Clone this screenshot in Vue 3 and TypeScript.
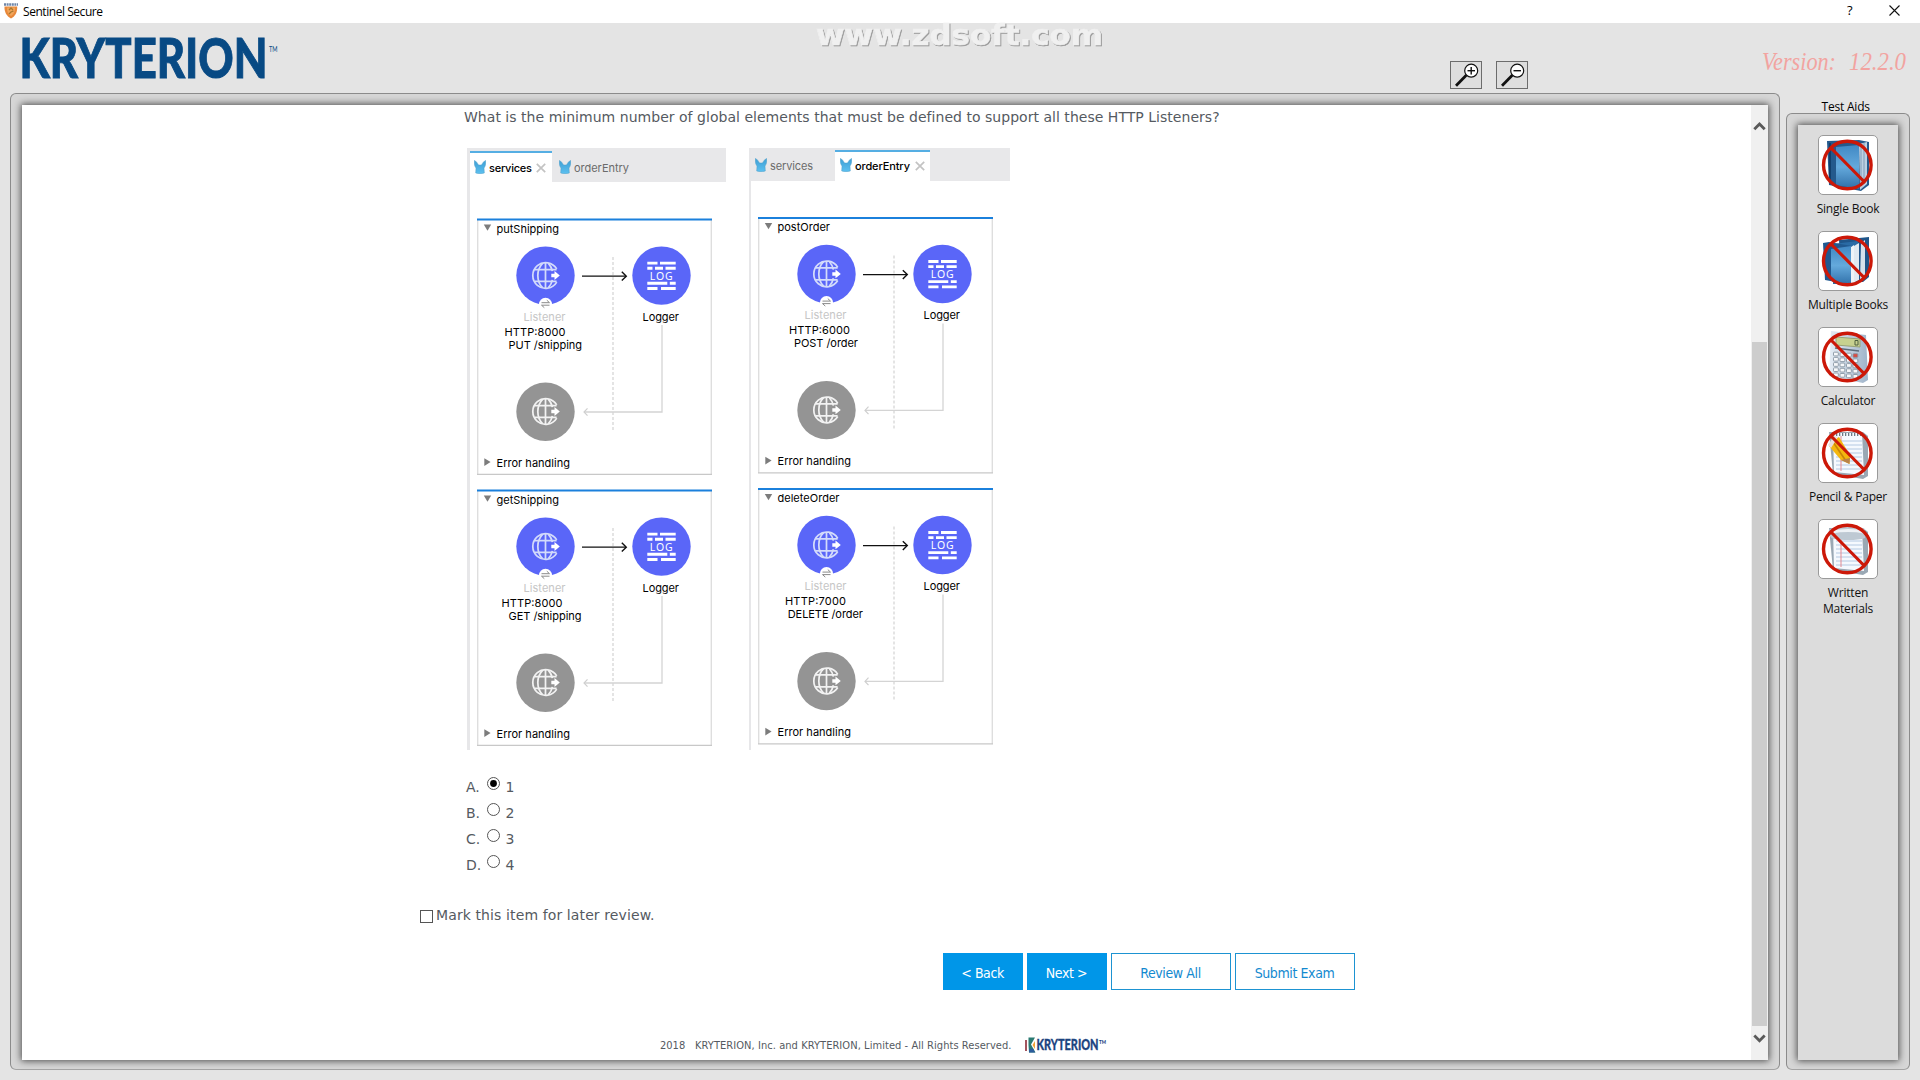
<script setup lang="ts">
interface Flow {
  title: string
  titleWidth: number
  http: string
  httpX: number
  route: string
  routeX: number
  routeWidth: number
}
interface Tab {
  label: string
  active: boolean
  width: number
}
interface Editor {
  id: string
  viewBox: string
  tabs: Tab[]
  flows: Flow[]
}

const editors: Editor[] = [
  {
    id: 'left',
    viewBox: '0 0 236 258',
    tabs: [
      { label: 'services', active: true, width: 43 },
      { label: 'orderEntry', active: false, width: 55 },
    ],
    flows: [
      { title: 'putShipping', titleWidth: 62.5, http: 'HTTP:8000', httpX: 27.5, route: 'PUT /shipping', routeX: 31.5, routeWidth: 73.5 },
      { title: 'getShipping', titleWidth: 62.5, http: 'HTTP:8000', httpX: 24.5, route: 'GET /shipping', routeX: 31.5, routeWidth: 73 },
    ],
  },
  {
    id: 'right',
    viewBox: '0 0.6 236 258',
    tabs: [
      { label: 'services', active: false, width: 43 },
      { label: 'orderEntry', active: true, width: 55 },
    ],
    flows: [
      { title: 'postOrder', titleWidth: 52.5, http: 'HTTP:6000', httpX: 31, route: 'POST /order', routeX: 36, routeWidth: 64 },
      { title: 'deleteOrder', titleWidth: 62, http: 'HTTP:7000', httpX: 27, route: 'DELETE /order', routeX: 29.7, routeWidth: 75.3 },
    ],
  },
]

const options = [
  { letter: 'A.', value: '1' },
  { letter: 'B.', value: '2' },
  { letter: 'C.', value: '3' },
  { letter: 'D.', value: '4' },
]
const selected = '1'

const aids = [
  { kind: 'book', label: 'Single Book' },
  { kind: 'books', label: 'Multiple Books' },
  { kind: 'calc', label: 'Calculator' },
  { kind: 'pencil', label: 'Pencil & Paper' },
  { kind: 'written', label: 'Written Materials' },
]
</script>

<template>
  <div class="window">
    <svg width="0" height="0" class="defs">
      <defs>
        <linearGradient id="cover" x1="0" y1="0" x2="0" y2="1">
          <stop offset="0" stop-color="#4088c4" />
          <stop offset="0.5" stop-color="#64a9dc" />
          <stop offset="1" stop-color="#2f6fa8" />
        </linearGradient>
        <linearGradient id="steel" x1="0" y1="0" x2="1" y2="0">
          <stop offset="0" stop-color="#e6edf5" />
          <stop offset="1" stop-color="#9fb4ca" />
        </linearGradient>
        <linearGradient id="horn" x1="0" y1="0" x2="0" y2="1">
          <stop offset="0" stop-color="#3e9fd4" />
          <stop offset="1" stop-color="#5cc0f0" />
        </linearGradient>
        <symbol id="globe" viewBox="-15 -15 30 30">
          <g fill="none" stroke="currentColor" stroke-width="1.8">
            <path d="M11.600 -6.800A13.300 13.300 0 1 0 11.600 6.800" />
            <path d="M0 -13V13M-3 -12.600C-9.600 -6 -9.600 6 -3 12.600M3 -12.600C5.400 -10 6.600 -7 7.100 -4.500M3 12.600C5.400 10 6.600 7 7.100 4.500" />
            <path d="M-11.500 -6.200H11.500M-11.500 6.200H11.500" />
          </g>
          <path d="M6 -1.800H9.300V-4.600L14.800 0L9.300 4.600V1.800H6Z" fill="#fff" />
        </symbol>
      </defs>
    </svg>

    <header class="titlebar">
      <svg class="shield" width="16" height="16" viewBox="0 0 16 16">
        <path d="M1 1.500H15" stroke="#6f86a8" stroke-width="2.400" stroke-dasharray="2 .6" />
        <path d="M1.500 3.500H14.200C14.500 9 12.500 13 8 15.600C3.500 13 1.200 9 1.500 3.500Z" fill="#e8883a" />
        <path d="M4 4.500H12C12.200 8.500 11 11 8 13C5 11 3.800 8.500 4 4.500Z" fill="#f2a55a" />
        <path d="M6 7L8 5L10 7M6 11L8 9L10.500 8" stroke="#a8772e" stroke-width="1.300" fill="none" />
      </svg>
      <span class="wintitle">Sentinel Secure</span>
      <span class="help">?</span>
      <svg class="close" width="11" height="11" viewBox="0 0 11 11"><path d="M.5 .5L10.500 10.500M10.500 .5L.5 10.500" stroke="#111" stroke-width="1.100" /></svg>
    </header>

    <section class="banner">
      <svg class="logo" width="262" height="60" viewBox="0 0 262 60">
        <text x="-.5" y="46.300" textLength="248" lengthAdjust="spacingAndGlyphs" font-size="55" font-weight="900" class="lato" fill="#084a84" stroke="#084a84" stroke-width=".9">KRYTERION</text>
        <text x="249" y="19.500" textLength="8.500" lengthAdjust="spacingAndGlyphs" font-size="7" class="lato" fill="#084a84">TM</text>
      </svg>
      <div class="zooms">
        <button v-for="sign in ['plus', 'minus']" :key="sign" class="zoom">
          <svg width="30" height="26" viewBox="0 0 30 26">
            <path d="M5 23.800L15.500 13" stroke="#111" stroke-width="2.800" />
            <circle cx="20.200" cy="8.700" r="6.500" fill="#fff" stroke="#111" stroke-width="1.200" />
            <path d="M16.500 8.700H24" stroke="#111" stroke-width="1.400" />
            <path v-if="sign === 'plus'" d="M20.200 5V12.500" stroke="#111" stroke-width="1.400" />
          </svg>
        </button>
      </div>
      <svg class="version" width="150" height="32" viewBox="0 0 150 32">
        <text x="2" y="23" textLength="74" lengthAdjust="spacingAndGlyphs">Version:</text>
        <text x="89" y="23" textLength="57" lengthAdjust="spacingAndGlyphs">12.2.0</text>
      </svg>
    </section>
    <svg class="watermark" width="300" height="40" viewBox="0 0 300 40">
      <g class="stamp">
        <text x="6" y="26.500" textLength="287" lengthAdjust="spacingAndGlyphs">www.zdsoft.com</text>
      </g>
    </svg>

    <div class="columns">
      <main class="frame main">
        <div class="page">
          <div class="content">
            <p class="question">What is the minimum number of global elements that must be defined to support all these HTTP Listeners?</p>
            <div class="editors">
              <div v-for="ed in editors" :key="ed.id" class="editor" :class="ed.id">
                <div class="tabs">
                  <div v-for="tab in ed.tabs" :key="tab.label" class="tab" :class="{ active: tab.active }">
                    <svg width="12" height="14" viewBox="0 0 12 14">
                      <path d="M.4 .4C1.900 .9 3.600 3.200 4.500 5H7.500C8.400 3.200 10.100 .9 11.600 .4C12 3.800 11.500 6 10 8L10.300 13C7.500 13.900 4.500 13.900 1.700 13L2 8C.5 6 0 3.800 .4 .4Z" fill="url(#horn)" stroke="#4f9fc9" stroke-width=".5" />
                    </svg>
                    <svg :width="tab.width" height="16" class="tabtext"><text x="0" y="12" :textLength="tab.width">{{ tab.label }}</text></svg>
                    <svg v-if="tab.active" class="x" width="10" height="10" viewBox="0 0 10 10"><path d="M.8 .8L9.200 9.200M9.200 .8L.8 9.200" stroke="#c3c3c3" stroke-width="1.700" /></svg>
                  </div>
                </div>
                <div class="flows">
                  <svg v-for="flow in ed.flows" :key="flow.title" class="flow" width="236" height="258" :viewBox="ed.viewBox">
                    <path d="M.7 2V256.500M234.300 2V256.500" stroke="#dedede" stroke-width="1.400" />
                    <path d="M0 256.400H235" stroke="#c8c8c8" stroke-width="1.200" />
                    <path d="M0 1.500H235" stroke="#1b80dc" stroke-width="2" />
                    <path d="M6.800 6.500H14.200L10.500 12.800Z" fill="#7c7c7c" />
                    <text x="19.500" y="14.500" :textLength="flow.titleWidth">{{ flow.title }}</text>
                    <path d="M136 39V212" stroke="#dcdcdc" stroke-width="1.500" stroke-dasharray="3 2" />
                    <path d="M185 107V194H107" fill="none" stroke="#d4d4d4" stroke-width="1.300" />
                    <path d="M110.500 190.300L107 194L110.500 197.700" fill="none" stroke="#cfcfcf" stroke-width="1.200" />
                    <circle cx="68.500" cy="57.600" r="29.200" fill="#5a66f8" />
                    <use href="#globe" x="54" y="43" width="29" height="29" class="pale" />
                    <circle cx="68.500" cy="86.300" r="6.600" fill="#fff" />
                    <path d="M64.500 84.700H72.500L69.800 82.200M72.500 87.200H64.500L67.300 89.700" fill="none" stroke="#8b8b8b" stroke-width="1" />
                    <path d="M105 58.200H149" stroke="#111" stroke-width="1.300" />
                    <path d="M144.800 53.800L149.300 58.200L144.800 62.600" fill="none" stroke="#111" stroke-width="1.400" />
                    <circle cx="184.500" cy="57.600" r="29.200" fill="#5a66f8" />
                    <g fill="#fff">
                      <path d="M170.300 43.700H180.500V46.600H170.300ZM183 43.700H198.700V46.600H183Z" />
                      <path d="M170.300 48.800H175.500V51.700H170.300ZM178 48.800H186V51.700H178ZM188.500 48.800H198.700V51.700H188.500Z" />
                      <path d="M170.300 63.800H190.300V66.700H170.300ZM192.800 63.800H198.700V66.700H192.800Z" />
                      <path d="M170.300 69H180.500V71.900H170.300ZM184 69H198.700V71.900H184Z" />
                      <text x="172.700" y="61.800" textLength="23" class="log">LOG</text>
                    </g>
                    <text x="46.500" y="102.700" textLength="42" class="muted">Listener</text>
                    <text x="165.500" y="102.700" textLength="36.500">Logger</text>
                    <text :x="flow.httpX" y="117.800" textLength="61">{{ flow.http }}</text>
                    <text :x="flow.routeX" y="130.700" :textLength="flow.routeWidth">{{ flow.route }}</text>
                    <circle cx="68.500" cy="193.700" r="29.200" fill="#949494" />
                    <use href="#globe" x="54" y="179" width="29" height="29" class="white" />
                    <path d="M7.300 240.300V248L13.600 244.100Z" fill="#7c7c7c" />
                    <text x="19.500" y="249" textLength="73.500">Error handling</text>
                  </svg>
                </div>
              </div>
            </div>

            <div class="options">
              <div v-for="o in options" :key="o.value" class="option">
                <span class="letter">{{ o.letter }}</span>
                <svg width="14" height="14" viewBox="0 0 14 14">
                  <circle cx="6.500" cy="6.500" r="6" fill="#fff" stroke="#555" stroke-width="1" />
                  <circle v-if="o.value === selected" cx="6.500" cy="6.500" r="3.400" fill="#000" />
                </svg>
                <span>{{ o.value }}</span>
              </div>
            </div>
            <div class="mark"><i class="box"></i><span>Mark this item for later review.</span></div>
            <div class="buttons">
              <button class="btn solid">&lt; Back</button>
              <button class="btn solid">Next &gt;</button>
              <button class="btn">Review All</button>
              <button class="btn">Submit Exam</button>
            </div>
            <footer class="foot">
              <span class="year">2018</span>
              <span class="rights">KRYTERION, Inc. and KRYTERION, Limited - All Rights Reserved.</span>
              <svg width="84" height="20" viewBox="0 0 84 20">
                <path d="M1 4V15" stroke="#8c2a35" stroke-width="1.600" />
                <path d="M3.500 1.500H10L6 8.500L10.500 16.500H4L3.500 9Z" fill="#2a7a72" />
                <path d="M7.500 9L10 5V13Z" fill="#f2a233" />
                <path d="M4 13L8 12.500L10 16.500H4Z" fill="#2b5c9c" />
                <text x="11.500" y="14.300" textLength="62" lengthAdjust="spacingAndGlyphs" font-size="14.500" font-weight="900" class="lato" fill="#1c4480" stroke="#1c4480" stroke-width=".3">KRYTERION</text>
                <text x="74" y="8" textLength="7" lengthAdjust="spacingAndGlyphs" font-size="5.500" font-weight="900" class="lato" fill="#1c4480">TM</text>
              </svg>
            </footer>
          </div>
          <div class="scroll">
            <svg width="17" height="34" viewBox="0 0 17 34"><path d="M3.300 24.300L8.500 19L13.700 24.300" fill="none" stroke="#5a5a5a" stroke-width="2.800" /></svg>
            <i class="thumb"></i>
            <svg width="17" height="34" viewBox="0 0 17 34"><path d="M3.300 9.500L8.500 14.800L13.700 9.500" fill="none" stroke="#5a5a5a" stroke-width="2.800" /></svg>
          </div>
        </div>
      </main>

      <aside class="side">
        <h2 class="sidetitle">Test Aids</h2>
        <div class="frame aidframe">
          <div class="aids">
            <div v-for="a in aids" :key="a.kind" class="aid">
              <div class="tile">
                <svg width="57" height="57" viewBox="0 0 57 57">
                  <g v-if="a.kind === 'book'">
                    <path d="M8 5L40 4L50 6V49L42 55L10 49Z" fill="#24598c" />
                    <path d="M40 8L48 6V48L41 54Z" fill="#bcd0e2" />
                    <path d="M42 8V50M45 7V48" stroke="#6f8fae" stroke-width=".8" />
                    <path d="M17 11L40 9V53L17 49Z" fill="url(#cover)" />
                    <path d="M11 7V47" stroke="#123f6c" stroke-width="2" />
                  </g>
                  <g v-else-if="a.kind === 'books'">
                    <path d="M20 8L50 5V45L44 50H22Z" fill="#1f5589" />
                    <path d="M42 11L46 8V46L41 49Z" fill="#d5e1ec" />
                    <path d="M14 12L39 9V48L30 52H14Z" fill="#2a6ba5" />
                    <path d="M35 14L40 11V48L34 51Z" fill="#e0e9f1" />
                    <path d="M4 11L10 10L33 14V53L6 48Z" fill="#20588f" />
                    <path d="M12 17L32 14V53L12 49Z" fill="url(#cover)" />
                    <path d="M32 15L35 13V51L32 53Z" fill="#eef3f7" />
                  </g>
                  <g v-else-if="a.kind === 'calc'">
                    <path d="M12 3L47 7L49 52L44 55L10 48Z" fill="url(#steel)" />
                    <path d="M17 9L41 11V19L17 17Z" fill="#c7d18f" stroke="#98a377" />
                    <path d="M36 12.500H39V17H36Z" fill="none" stroke="#4e6040" />
                    <path d="M16 20L40 23" stroke="#5e6c79" stroke-width="1.500" />
                    <g v-for="r in 5" :key="r">
                      <rect v-for="c in 4" :key="c" :x="8 + c * 6.500" :y="18.500 + r * 5.200 + c * .5" width="4.800" height="3.700" rx=".8" :fill="r === 1 && c === 4 ? '#d94b41' : '#f7f8fa'" stroke="#8895a3" stroke-width=".9" />
                    </g>
                  </g>
                  <g v-else>
                    <path d="M10 8H44L49 12V52L44 55L14 50Z" fill="#9aa8b4" />
                    <path d="M14 9H43L45 51L15 48Z" fill="#f5f9fe" />
                    <path d="M17 17H43M17 21H43M17 25H43M17 29H43M17 33H43M17 37H43M17 41H43M17 45H43" stroke="#b4c9e2" stroke-width="1" />
                    <path d="M22 12V47" stroke="#e58a92" stroke-width="1" />
                    <path v-if="a.kind === 'pencil'" d="M14 10.500H44" stroke="#6d7984" stroke-width="3" stroke-dasharray="1.300 1.700" />
                    <g v-if="a.kind === 'pencil'">
                      <path d="M14 16L20 13L31 31L30.500 40L22 36L10 22Z" fill="#f4b70f" />
                      <path d="M14 18L27 37" stroke="#c78508" stroke-width="1.600" />
                      <path d="M9 21L15 12L19 13L12 24Z" fill="#eadfe0" />
                      <path d="M22 36L30.500 40L31 34Z" fill="#b9824a" />
                    </g>
                    <path v-if="a.kind === 'written'" d="M10 10C16 6 38 6 46 9V18C38 21 22 20 15 19C11 18 9 14 10 10Z" fill="#bec9d3" />
                    <path v-if="a.kind === 'written'" d="M14 12C22 10 36 10 45 12" stroke="#eef2f6" stroke-width="3" fill="none" />
                  </g>
                  <circle cx="28.300" cy="29" r="23.800" fill="none" stroke="#cc1808" stroke-width="3.400" />
                  <path d="M12.500 12.500L45 45.500" stroke="#cc1808" stroke-width="3.200" />
                </svg>
              </div>
              <span class="aidlabel">{{ a.label }}</span>
            </div>
          </div>
        </div>
      </aside>
    </div>
  </div>
</template>

<style>
html, body { margin: 0; background: #e4e4e4; }
</style>

<style scoped>
* { box-sizing: border-box; }
.window { position: relative; width: 1920px; height: 1080px; overflow: hidden; display: flex; flex-direction: column; background: #e4e4e4; font-family: "Open Sans", "Noto Sans", sans-serif; }
.defs { position: absolute; }
.titlebar { height: 23px; flex: none; background: #fff; display: flex; align-items: flex-start; padding: 3px 20px 0 3px; color: #000; font: 12px/18px "Open Sans", sans-serif; }
.wintitle { margin-left: 4px; letter-spacing: -.45px; }
.help { margin-left: auto; width: 8px; margin-right: 34px; line-height: 15px; font-size: 13px; }
.close { margin: 2px 0 0; }
.banner { height: 70px; flex: none; display: flex; padding-left: 20px; }
.logo { margin-top: 9px; overflow: visible; }
.lato { font-family: Lato, sans-serif; }
.zooms { display: flex; gap: 14px; margin: 38px 0 0 1168px; }
.zoom { width: 32px; height: 28px; padding: 0; border: 1px solid #6c6c6c; background: #dedede; display: block; }
.zoom svg { display: block; }
.version { margin: 24px 0 0 232px; font: italic 25px "Liberation Serif", serif; fill: #f2a3a0; }
.watermark { position: absolute; left: 810px; top: 18px; font: bold 29px "DejaVu Sans", sans-serif; }
.stamp { fill: #f0f0f0; stroke: #f0f0f0; stroke-width: .6px; filter: drop-shadow(1.200px 1.200px 0 #999); }
.columns { display: flex; padding-left: 10px; gap: 6px; height: 977px; }
.frame { border: 1px solid #8b8b8b; border-bottom-color: #a4a4a4; border-radius: 6px; background: #d6d6d6; padding: 11px 11px 9px; display: flex; }
.main { width: 1770px; height: 977px; }
.page { flex: 1; background: #fff; display: flex; box-shadow: 0 0 7px 1px rgba(0, 0, 0, .65); }
.content { flex: 1; font-family: "DejaVu Sans", sans-serif; color: #555a61; font-size: 14px; }
.question { margin: 3px 0 0 442px; line-height: 18px; white-space: nowrap; letter-spacing: .028px; }
.editors { display: flex; margin: 22px 0 0 445px; gap: 22px; font-family: Inter, sans-serif; height: 602px; }
.editor { display: flex; flex-direction: column; border-left: 3px solid #e7e7e9; width: 259px; }
.editor.right { width: 261px; border-left-width: 2px; margin-left: 1px; }
.tabs { background: #e8e8ea; height: 34px; display: flex; padding-top: 3px; flex: none; }
.right .tabs { height: 33px; padding-top: 2px; }
.tab { display: flex; align-items: flex-start; padding: 9px 0 0 6px; gap: 3px; width: 86px; border-top: 0 solid #55aee3; }
.left .active { width: 82px; background: #fff; border-top-width: 2px; padding: 7px 0 0 3.500px; }
.left .tab:not(.active) { padding-left: 7px; }
.right .tab { padding: 8px 0 0 4px; width: 84px; }
.right .active { width: 95px; background: #fff; border-top-width: 2px; padding: 6px 0 0 5px; }
.tab svg { flex: none; display: block; }
.tabtext { font-size: 11px; fill: #6b6b6b; overflow: visible; }
.active .tabtext { fill: #000; font-weight: 500; }
.tab .x { margin: 3px 0 0 1.500px; }
.flows { padding: 36px 0 0 7px; display: flex; flex-direction: column; gap: 13px; }
.right .flows { padding: 36px 0 0 7px; }
.flow { display: block; font-size: 11px; fill: #000; }
.flow .muted { fill: #c6c6c6; }
.pale { color: #d3dbfb; }
.white { color: #f2f2f2; }
.log { font: 10.500px "Noto Sans", sans-serif; fill: #fff; }
.options { margin: 24px 0 0 444px; }
.option { height: 26px; display: flex; line-height: 26px; }
.option .letter { width: 20.500px; }
.option svg { margin: 2.500px 5px 0 0; }
.mark { display: flex; margin: 27px 0 0 398px; height: 20px; line-height: 20px; letter-spacing: .11px; }
.box { width: 13px; height: 13px; border: 1px solid #555; margin: 5px 3px 0 0; }
.buttons { display: flex; gap: 4px; margin: 28px 0 0 921px; }
.btn { width: 120px; height: 37px; border: 1px solid #1d93d2; background: #fff; color: #1389cf; font: 14px "DejaVu Sans Condensed", "DejaVu Sans", sans-serif; letter-spacing: -.4px; padding: 2px 1px 0 0; white-space: nowrap; }
.solid { width: 80px; background: #0096e8; border-color: #0096e8; color: #fff; }
.foot { display: flex; margin: 46px 0 0 638px; font: 11px/20px "DejaVu Sans Condensed", "DejaVu Sans", sans-serif; white-space: nowrap; }
.year { width: 35px; }
.rights { width: 330px; letter-spacing: .06px; }
.scroll { width: 17px; background: #f0f0f0; display: flex; flex-direction: column; }
.scroll svg { display: block; flex: none; }
.thumb { margin: 203px 1px 0; height: 684px; background: #cdcdcd; }
.side { width: 124px; padding-top: 4px; }
.sidetitle { margin: 0; padding-left: 35.500px; height: 16px; font: 12px/20px "Open Sans", sans-serif; color: #000; letter-spacing: -.2px; }
.aidframe { width: 124px; height: 957px; }
.aids { flex: 1; background: #dcdcdc; box-shadow: 0 0 7px 1px rgba(0, 0, 0, .65); padding-top: 10px; display: flex; flex-direction: column; align-items: center; }
.aid { height: 96px; display: flex; flex-direction: column; align-items: center; }
.tile { width: 60px; height: 60px; flex: none; border: 1px solid #9a9a9a; border-radius: 5px; background: #fff; }
.tile svg { display: block; }
.aidlabel { margin-top: 6px; width: 86px; text-align: center; font-size: 12px; line-height: 16px; letter-spacing: -.2px; color: #111; }
</style>
